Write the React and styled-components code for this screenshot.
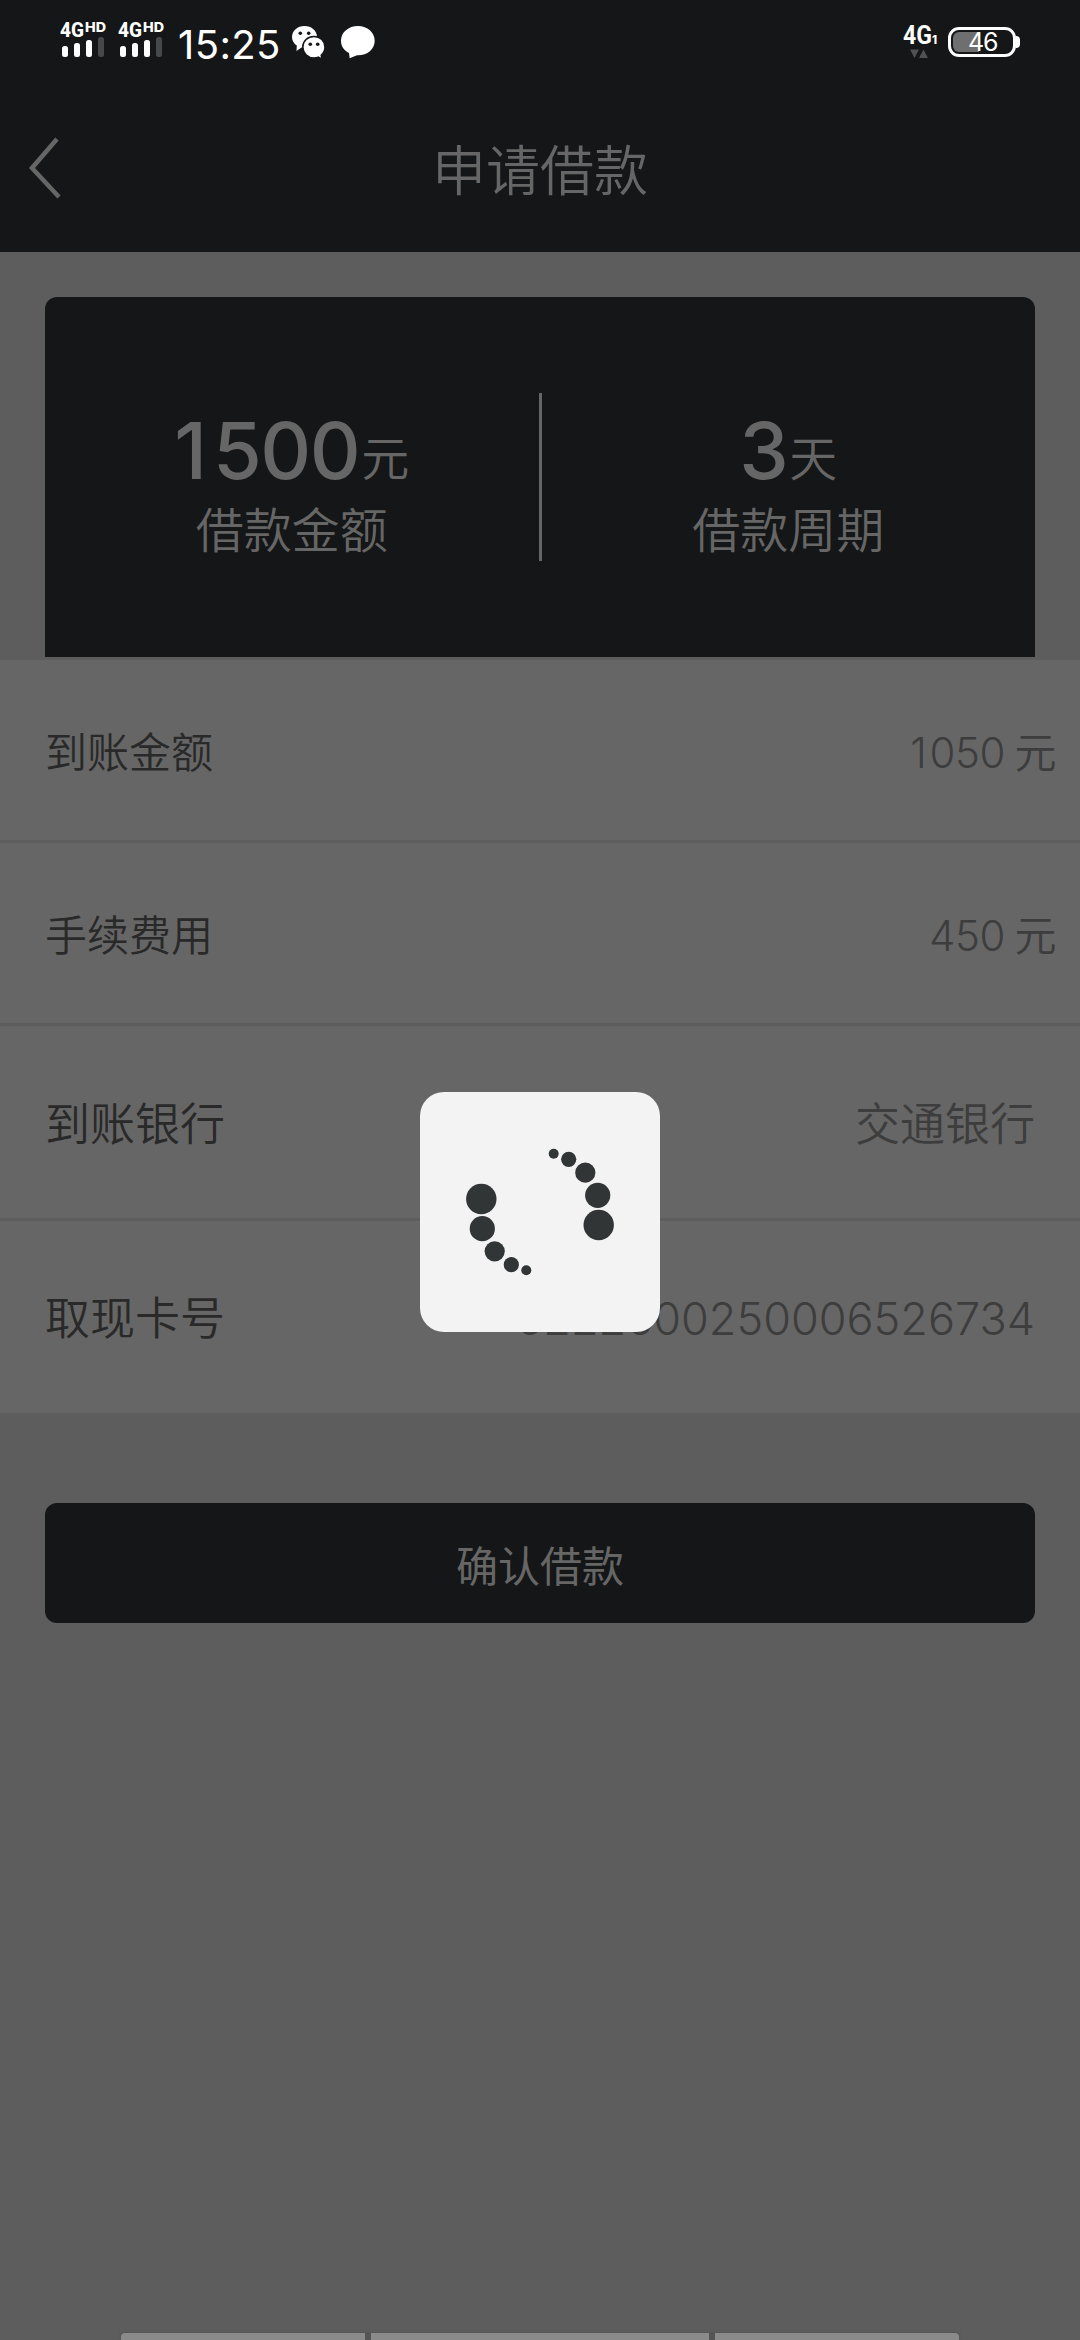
import React from 'react';
import styled, { createGlobalStyle } from 'styled-components';

const GlobalStyle = createGlobalStyle`
  * {
    box-sizing: border-box;
  }
  body {
    margin: 0;
    background: #5d5d5d;
    font-family: Inter, "Noto Sans CJK SC", sans-serif;
    -webkit-font-smoothing: antialiased;
  }
`;

const Screen = styled.div`
  display: flex;
  flex-direction: column;
  position: relative;
  width: 1080px;
  height: 2340px;
  overflow: hidden;
  background: #5d5d5d;
`;

const StatusBar = styled.div`
  display: flex;
  justify-content: space-between;
  height: 84px;
  padding: 14px 60px 0 60px;
  background: #151617;
  color: #fff;
`;

const StatusGroup = styled.div`
  display: flex;
  align-items: flex-start;
`;

const SignalSvg = styled.svg`
  display: block;
  margin-right: 6px;
  font-family: Roboto, sans-serif;
  font-weight: 800;
`;

const SmallText = styled.text`
  font-family: Inter, sans-serif;
  font-weight: 800;
`;

const Clock = styled.div`
  width: 110px;
  margin: 6px 4px 0 2px;
  font-size: 40px;
  line-height: 49px;
  letter-spacing: 0.4px;
  white-space: nowrap;
`;

const StatusIcon = styled.svg`
  display: block;
  margin-top: 12px;
  margin-right: ${(props) => props.$gap || 0}px;
`;

const NetworkSvg = styled.svg`
  display: block;
  margin-right: 10px;
  font-family: Roboto, sans-serif;
  font-weight: 700;
`;

const Battery = styled.div`
  display: flex;
  align-items: center;
  margin-top: 13px;
`;

const BatteryShell = styled.div`
  display: flex;
  width: 68px;
  height: 30px;
  padding: 2px;
  border: 3px solid #fff;
  border-radius: 11px;
`;

const BatteryFill = styled.div`
  width: 26px;
  height: 20px;
  border-radius: 6px 0 0 6px;
  background: #6f6f6f;
`;

const BatteryText = styled.span`
  margin-left: -11px;
  font-size: 25px;
  line-height: 21px;
  letter-spacing: -1.2px;
`;

const BatteryTip = styled.div`
  width: 4px;
  height: 12px;
  border-radius: 0 4px 4px 0;
  background: #fff;
`;

const Header = styled.div`
  display: grid;
  grid-template-columns: 120px 1fr 120px;
  align-items: center;
  height: 168px;
  background: #151617;
`;

const BackIcon = styled.svg`
  display: block;
  margin-left: 26px;
`;

const Title = styled.div`
  padding-top: 7px;
  color: #666;
  font-size: 54px;
  font-weight: 350;
  line-height: 80px;
  text-align: center;
`;

const Card = styled.div`
  display: flex;
  height: 360px;
  margin: 45px 45px 3px;
  padding-top: 96px;
  border-radius: 12px 12px 0 0;
  background: #151617;
  color: #666;
`;

const Divider = styled.div`
  width: 3px;
  height: 168px;
  background: #666;
`;

const Figure = styled.div`
  flex: 1;
  padding-top: 10px;
  text-align: center;
`;

const Amount = styled.div`
  height: 94px;
  font-size: 79px;
  font-weight: 500;
  line-height: 94px;
  letter-spacing: -1.5px;
`;

const LeadDigit = styled.span`
  letter-spacing: ${(props) => props.$space}px;
`;

const Unit = styled.span`
  margin-left: 2px;
  font-size: 48px;
  font-weight: 350;
  line-height: 48px;
  letter-spacing: 0;
  vertical-align: 3px;
`;

const Caption = styled.div`
  margin-top: -1px;
  font-size: 48px;
  font-weight: 350;
  line-height: 70px;
`;

const List = styled.div`
  height: 753px;
  background: #666;
`;

const Row = styled.div`
  display: flex;
  align-items: center;
  justify-content: space-between;
  height: ${(props) => (props.$large ? 195 : 183)}px;
  padding: 6px ${(props) => (props.$large ? 45 : 24)}px 0 45px;
  padding-top: ${(props) => (props.$last ? 1 : 6)}px;
  border-bottom: ${(props) => (props.$last ? 0 : 3)}px solid #5d5d5d;
  font-size: ${(props) => (props.$large ? 45 : 42)}px;
  font-weight: 350;
  line-height: 66px;
`;

const Label = styled.span`
  color: #292929;
`;

const Value = styled.span`
  color: #3d3d3d;
  letter-spacing: ${(props) => (props.$sum ? -0.4 : 0)}px;
  word-spacing: ${(props) => (props.$sum ? -2 : 0)}px;
`;

const Submit = styled.button`
  display: block;
  height: 120px;
  margin: 90px 45px 0;
  border: 0;
  border-radius: 12px;
  background: #151617;
  color: #666;
  font-family: inherit;
  font-size: 42px;
  font-weight: 400;
`;

const Loading = styled.div`
  position: absolute;
  top: 1092px;
  left: 420px;
  width: 240px;
  height: 240px;
  border-radius: 24px;
  background: #f3f3f3;
`;

const NavHandle = styled.div`
  display: flex;
  gap: 6px;
  height: 7px;
  margin: auto 121px 0;
  border-radius: 4px 4px 0 0;
  background: #545454;
  box-shadow: 0 0 3px #4c4c4c;
  overflow: hidden;
`;

const NavPart = styled.div`
  width: ${(props) => props.$width}px;
  background: #8b8a8b;
`;

const rows = [
  { label: '到账金额', value: <><LeadDigit $space={2.5}>1</LeadDigit>050 元</>, sum: true },
  { label: '手续费用', value: '450 元', sum: true },
  { label: '到账银行', value: '交通银行', large: true },
  { label: '取现卡号', value: '6222600250006526734', large: true },
];

const dots = [
  [133.7, 61.7, 5],
  [148.7, 67.3, 7.6],
  [165.3, 80.7, 10.1],
  [177.7, 103.3, 12.6],
  [178.7, 133, 15.2],
  [61.3, 107, 15.2],
  [62.3, 136.7, 12.6],
  [74.7, 159.3, 10.1],
  [91.3, 172.7, 7.6],
  [106.3, 178.3, 5],
];

const Signal = () => (
  <SignalSvg width="52" height="46" viewBox="0 0 52 46" fill="#fff">
    <text x="0" y="23" fontSize="21" textLength="24" lengthAdjust="spacingAndGlyphs">4G</text>
    <SmallText x="25" y="18" fontSize="13" textLength="21" lengthAdjust="spacingAndGlyphs">HD</SmallText>
    <rect x="2" y="32" width="6" height="11" rx="2.5" />
    <rect x="14" y="29" width="6" height="14" rx="2.5" />
    <rect x="26" y="26" width="6" height="17" rx="2.5" />
    <rect x="38" y="23" width="6" height="20" rx="2.5" fill="#47484a" />
  </SignalSvg>
);

class App extends React.Component {
  render() {
    return (
      <>
        <GlobalStyle />
        <Screen>
          <StatusBar>
            <StatusGroup>
              <Signal />
              <Signal />
              <Clock>15:25</Clock>
              <StatusIcon $gap={16} width="33" height="34" viewBox="0 0 33 34">
                <path d="M12.5 0C5.5 0 0 4.7 0 11c0 3.5 1.8 6.6 4.8 8.6L4.5 25l5-3.4c1 .2 2 .3 3 .3C19.500 21.900 25 17.200 25 11S19.500 0 12.500 0z" fill="#fff" />
                <circle cx="8.3" cy="7.3" r="1.8" fill="#151617" />
                <circle cx="16.7" cy="7.3" r="1.8" fill="#151617" />
                <path d="M22 10.5c-6.3 0-11.2 4.6-11.2 10.5S15.700 32 22 32c1.600 0 3-.3 4.300-.8l3.700 1.900-.7-3.900c2.300-2 3.700-4.900 3.700-8.200 0-5.900-4.800-10.500-11-10.500z" fill="#fff" stroke="#151617" strokeWidth="1.6" />
                <circle cx="18.3" cy="18.3" r="1.8" fill="#151617" />
                <circle cx="25.7" cy="18.3" r="1.8" fill="#151617" />
              </StatusIcon>
              <StatusIcon width="34" height="33" viewBox="0 0 34 33" fill="#fff">
                <path d="M17 0C7.500 0 0 6.200 0 14.700c0 5.500 3 9.800 8 12.300L8.700 32.200 16 29.300h1c9.500 0 16.700-6.300 16.700-14.600S26.500 0 17 0z" />
              </StatusIcon>
            </StatusGroup>
            <StatusGroup>
              <NetworkSvg width="35" height="46" viewBox="0 0 35 46" fill="#fff">
                <text x="0" y="30" fontSize="25" textLength="29" lengthAdjust="spacingAndGlyphs">4G</text>
                <SmallText x="29" y="30" fontSize="11.5">1</SmallText>
                <path d="M7 35.5h9l-4.500 8.500zM16 44l4.500-8.500L25 44z" fill="#505153" />
              </NetworkSvg>
              <Battery>
                <BatteryShell>
                  <BatteryFill />
                  <BatteryText>46</BatteryText>
                </BatteryShell>
                <BatteryTip />
              </Battery>
            </StatusGroup>
          </StatusBar>
          <Header>
            <BackIcon width="36" height="62" viewBox="0 0 36 62" fill="none" stroke="#666" strokeWidth="4.5">
              <path d="M31 2L6 31l27 29" />
            </BackIcon>
            <Title>申请借款</Title>
          </Header>
          <Card>
            <Figure>
              <Amount><LeadDigit $space={6}>1</LeadDigit>500<Unit>元</Unit></Amount>
              <Caption>借款金额</Caption>
            </Figure>
            <Divider />
            <Figure>
              <Amount>3<Unit>天</Unit></Amount>
              <Caption>借款周期</Caption>
            </Figure>
          </Card>
          <List>
            {rows.map((row, i) => (
              <Row key={row.label} $large={row.large} $last={i === rows.length - 1}>
                <Label>{row.label}</Label>
                <Value $sum={row.sum}>{row.value}</Value>
              </Row>
            ))}
          </List>
          <Submit>确认借款</Submit>
          <NavHandle>
            <NavPart $width={244} />
            <NavPart $width={338} />
            <NavPart $width={244} />
          </NavHandle>
          <Loading>
            <svg width="240" height="240" viewBox="0 0 240 240" fill="#313535">
              {dots.map(([x, y, r]) => (
                <circle key={`${x}-${y}`} cx={x} cy={y} r={r} />
              ))}
            </svg>
          </Loading>
        </Screen>
      </>
    );
  }
}

export default App;
